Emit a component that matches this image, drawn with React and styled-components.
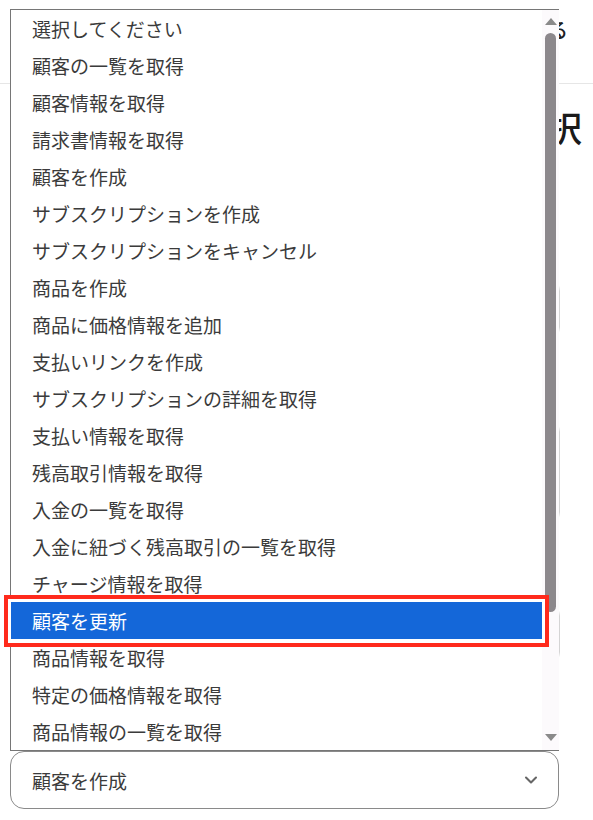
import React from 'react';
import styled, { createGlobalStyle } from 'styled-components';
import { ChevronDown } from 'lucide-react';

const FONT = '"Noto Sans CJK JP", "Noto Sans", sans-serif';
const ITEM_HEIGHT = 37;

const options = [
  '選択してください',
  '顧客の一覧を取得',
  '顧客情報を取得',
  '請求書情報を取得',
  '顧客を作成',
  'サブスクリプションを作成',
  'サブスクリプションをキャンセル',
  '商品を作成',
  '商品に価格情報を追加',
  '支払いリンクを作成',
  'サブスクリプションの詳細を取得',
  '支払い情報を取得',
  '残高取引情報を取得',
  '入金の一覧を取得',
  '入金に紐づく残高取引の一覧を取得',
  'チャージ情報を取得',
  '顧客を更新',
  '商品情報を取得',
  '特定の価格情報を取得',
  '商品情報の一覧を取得',
];

const SELECTED = 16;

const GlobalStyle = createGlobalStyle`
    html, body {
        margin: 0;
        padding: 0;
        background: #fff;
        font-family: ${FONT};
    }
`;

const Page = styled.div`
    position: relative;
    width: 593px;
    height: 820px;
    overflow: hidden;
    background: #fff;
`;

const Header = styled.header`
    height: 84px;
    border-bottom: 1px solid #e6e6e6;
    display: flex;
    align-items: flex-start;
    justify-content: flex-end;
    padding: 16px 25px 0 0;
    box-sizing: border-box;
`;

const HeaderTitle = styled.div`
    font-size: 20px;
    line-height: 28px;
    font-weight: 500;
    color: #1f1f1f;
`;

const Heading = styled.h1`
    margin: 19px 11px 0 0;
    font-size: 35px;
    line-height: 47px;
    font-weight: 500;
    color: #1a1a1a;
    text-align: right;
`;

const Field = styled.div`
    margin: ${({ top }) => top}px 0 0 10px;
    width: 550px;
    height: ${({ tall }) => (tall ? 104 : 60)}px;
    border: 1px solid #d4d4d4;
    border-radius: 12px;
    box-sizing: border-box;
`;

const SelectBox = styled.div`
    margin: 87px 0 0 10px;
    height: 58px;
    width: 549px;
    border: 1px solid #8a8a8a;
    border-radius: 14px;
    box-sizing: border-box;
    display: flex;
    align-items: center;
    justify-content: space-between;
    padding: 0 17px 0 21px;
    font-size: 19px;
    color: #3b3b3b;

    svg {
        color: #666;
    }
`;

const Popup = styled.div`
    position: absolute;
    top: 9px;
    left: 10px;
    width: 549px;
    height: 742px;
    box-sizing: border-box;
    border: 1px solid #767676;
    border-right: none;
    background: #fff;
    display: flex;
`;

const Options = styled.ul`
    flex: 1;
    margin: 0;
    padding: 0;
    list-style: none;
    overflow: hidden;
`;

const Option = styled.li`
    height: ${ITEM_HEIGHT}px;
    line-height: ${ITEM_HEIGHT}px;
    padding-left: 21px;
    font-size: 19px;
    white-space: nowrap;
    color: ${({ selected }) => (selected ? '#fff' : '#3b3b3b')};
    background: ${({ selected }) => (selected ? '#1467d9' : 'transparent')};
`;

const Track = styled.div`
    width: 17px;
    background: #fcfafc;
    display: flex;
    flex-direction: column;
    align-items: center;
`;

const Arrow = styled.div`
    width: 0;
    height: 0;
    border-left: 6.5px solid transparent;
    border-right: 6.5px solid transparent;
    ${({ down }) =>
        down
            ? 'border-top: 7px solid #8a8a8a; margin: auto 0 9px;'
            : 'border-bottom: 7px solid #8a8a8a; margin-top: 8px;'}
`;

const Thumb = styled.div`
    width: 11px;
    height: 579px;
    margin-top: 8px;
    border-radius: 6px;
    background: #8c888c;
`;

const Annotation = styled.div`
    position: absolute;
    left: 4px;
    top: 595px;
    width: 545px;
    height: 52px;
    box-sizing: border-box;
    border: 4px solid #ff2a1c;
    box-shadow: inset 0 0 0 3px #fff;
    pointer-events: none;
`;

const App = () => {
    return (
        <Page>
            <GlobalStyle />
            <Header>
                <HeaderTitle>アプリと連携する</HeaderTitle>
            </Header>
            <Heading>アクションを選択</Heading>
            <Field top={129} />
            <Field top={81} tall />
            <Field top={80} />
            <SelectBox>
                顧客を作成
                <ChevronDown size={20} strokeWidth={2.5} />
            </SelectBox>

            <Popup>
                <Options>
                    {options.map((option, i) => (
                        <Option key={option} selected={i === SELECTED}>
                            {option}
                        </Option>
                    ))}
                </Options>
                <Track>
                    <Arrow />
                    <Thumb />
                    <Arrow down />
                </Track>
            </Popup>
            <Annotation />
        </Page>
    );
};

export default App;
